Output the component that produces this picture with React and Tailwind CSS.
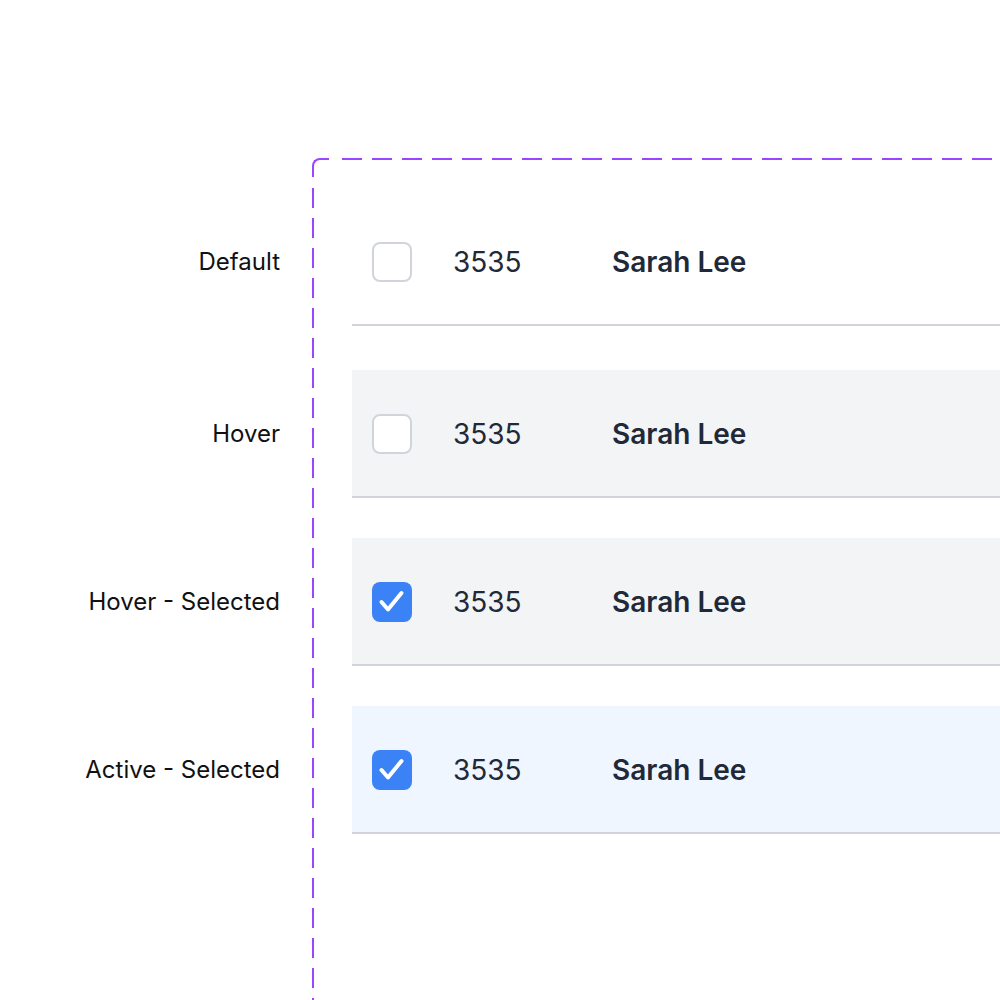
import React from 'react';

const rows = [
    { label: 'Default', bg: 'bg-white', checked: false, gap: 'mt-0' },
    { label: 'Hover', bg: 'bg-[#f3f4f6]', checked: false, gap: 'mt-[44px]' },
    { label: 'Hover - Selected', bg: 'bg-[#f3f4f6]', checked: true, gap: 'mt-[40px]' },
    { label: 'Active - Selected', bg: 'bg-[#eff6ff]', checked: true, gap: 'mt-[40px]' },
];

const Checkbox = ({ checked }) => {
    if (checked) {
        return (
            <div className="w-10 h-10 rounded-[8px] bg-[#3b82f6] flex items-center justify-center shrink-0">
                <svg width="40" height="40" viewBox="0 0 40 40" fill="none">
                    <path d="M9.5 20L16 27.5L29.5 11" stroke="white" strokeWidth="4" strokeLinecap="round" strokeLinejoin="round" />
                </svg>
            </div>
        );
    }
    return <div className="w-10 h-10 rounded-[8px] border-2 border-[#d1d5db] bg-white shrink-0" />;
};

const TableRow = ({ row }) => (
    <div className={`${row.gap} ${row.bg} h-[128px] pt-[2px] border-b-2 border-[#d1d5db] flex items-center pl-5`}>
        <Checkbox checked={row.checked} />
        <span className="ml-[41px] w-[159px] text-[28px] text-[#1f2937]">3535</span>
        <span className="text-[28px] font-semibold text-[#1f2937] whitespace-nowrap">Sarah Lee</span>
    </div>
);

export default function App() {
    return (
        <div className="w-[1000px] h-[1000px] overflow-hidden bg-white flex pt-[158px] font-['Inter',sans-serif]">
            {/* state labels */}
            <div className="w-[280px] shrink-0 pt-[40px] flex flex-col">
                {rows.map((row) => (
                    <div key={row.label} className={`${row.gap} h-[128px] flex items-center justify-end`}>
                        <span className="text-[24px] text-[#111111] whitespace-nowrap">{row.label}</span>
                    </div>
                ))}
            </div>

            {/* component set frame */}
            <div className="relative ml-[32px] w-[800px] h-[900px] shrink-0 pt-[40px] pl-[40px]">
                <div className="absolute top-0 left-0 w-[17px] h-[19px] border-t-2 border-l-2 border-[#9747ff] rounded-tl-[8px]" />
                <div className="absolute top-0 left-[30px] right-0 h-[2px] bg-[repeating-linear-gradient(90deg,#9747ff_0px,#9747ff_20px,transparent_20px,transparent_30px)]" />
                <div className="absolute left-0 top-[30px] bottom-0 w-[2px] bg-[repeating-linear-gradient(180deg,#9747ff_0px,#9747ff_20px,transparent_20px,transparent_30px)]" />

                <div className="flex flex-col">
                    {rows.map((row) => (
                        <TableRow key={row.label} row={row} />
                    ))}
                </div>
            </div>
        </div>
    );
}
